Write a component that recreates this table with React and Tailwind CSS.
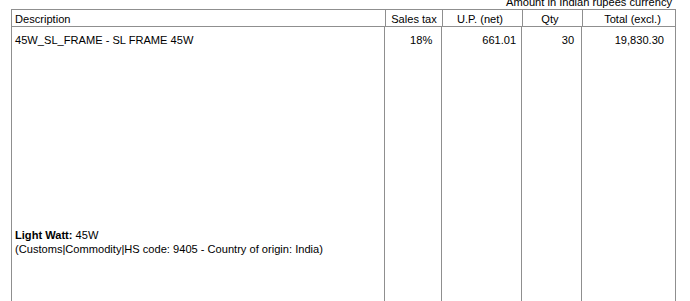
export default function App() {
  const font = { fontFamily: '"Liberation Sans", Arial, sans-serif' };
  return (
    <div className="w-[690px] h-[301px] overflow-hidden bg-white text-black text-[11.1px]" style={font}>
      <div className="mt-[-5px] h-[14px] leading-[14px] text-right pr-[18px]">Amount in Indian rupees currency</div>
      <div className="ml-[11px] w-[665px] flex flex-col h-[300px]">
        <div className="flex border-t border-b border-[#8f8f8f] h-[18px] leading-[13px]">
          <div className="w-[374px] border-l border-[#8f8f8f] pl-[3px] pt-[3px]">Description</div>
          <div className="w-[57px] border-l border-[#8f8f8f] pt-[3px] text-center">Sales tax</div>
          <div className="w-[80px] border-l border-[#8f8f8f] pt-[3px] text-center pr-[5px]">U.P. (net)</div>
          <div className="w-[60px] border-l border-[#8f8f8f] pt-[3px] text-center pr-[5px]">Qty</div>
          <div className="w-[94px] border-l border-r border-[#8f8f8f] pt-[3px] text-center pl-[7px]">Total (excl.)</div>
        </div>
        <div className="flex flex-1">
          <div className="w-[374px] border-l border-[#8f8f8f] pl-[3px] pt-[7px] flex flex-col">
            <div className="leading-[13px]">45W_SL_FRAME - SL FRAME 45W</div>
            <div className="mt-[181px] leading-[14px]">
              <div><span className="font-bold">Light Watt:</span> 45W</div>
              <div>(Customs|Commodity|HS code: 9405 - Country of origin: India)</div>
            </div>
          </div>
          <div className="w-[57px] border-l border-[#8f8f8f] pt-[7px] pr-[9px] text-right leading-[13px]">18%</div>
          <div className="w-[80px] border-l border-[#8f8f8f] pt-[7px] pr-[5px] text-right leading-[13px]">661.01</div>
          <div className="w-[60px] border-l border-[#8f8f8f] pt-[7px] pr-[7px] text-right leading-[13px]">30</div>
          <div className="w-[95px] border-l border-r border-[#8f8f8f] pt-[7px] pr-[11px] text-right leading-[13px]">19,830.30</div>
        </div>
      </div>
    </div>
  );
}
